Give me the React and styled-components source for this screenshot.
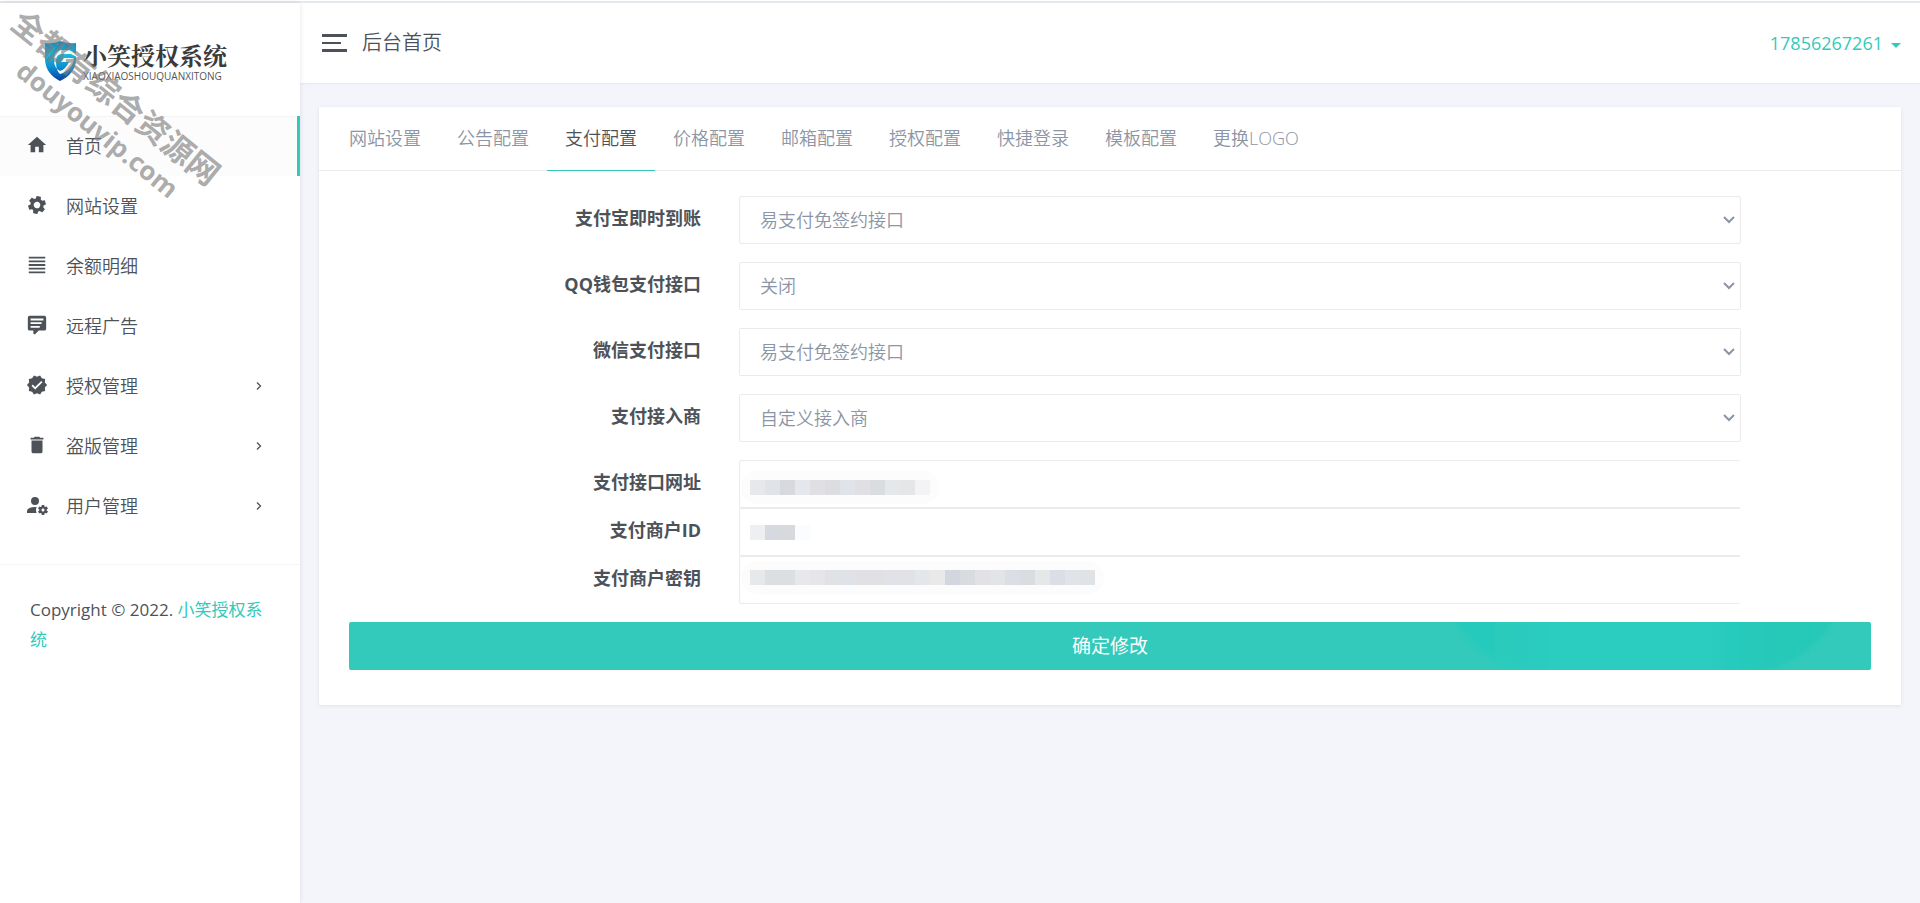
import React from 'react';
import styled, { createGlobalStyle, css } from 'styled-components';

const teal = '#33cabb';
const ink = '#4d5259';
const muted = '#8b95a5';
const line = '#ebebeb';

const GlobalStyle = createGlobalStyle`
  *, *::before, *::after { box-sizing: border-box; }
  body {
    margin: 0;
    background: #f3f5fa;
    color: ${ink};
    font: 350 18px/30px "Open Sans", "Noto Sans CJK SC", sans-serif;
  }
  a { color: inherit; text-decoration: none; }
  ul { margin: 0; padding: 0; list-style: none; }
  button, input, select { font: inherit; color: inherit; }
`;

const Page = styled.div`
  display: flex;
  min-height: calc(100vh - 3px);
`;

const TopRule = styled.div`
  height: 3px;
  background: #e4e9ee;
  border-top: 1px solid #fff;
`;

const Sidebar = styled.aside`
  position: relative;
  z-index: 2;
  flex: 0 0 300px;
  background: #fff;
  box-shadow: 0 0 5px rgba(0, 0, 0, 0.1);
`;

const Brand = styled.a`
  display: flex;
  align-items: center;
  gap: 6px;
  height: 113px;
  padding: 2px 44px 0;
`;

const BrandText = styled.span`
  display: flex;
  flex-direction: column;
  color: #3a3a3a;
`;

const BrandName = styled.strong`
  font: 700 24px/30px "Noto Serif CJK SC", "Noto Sans CJK SC", serif;
`;

const BrandPinyin = styled.span`
  color: #555;
  font: 400 10px/12px "Open Sans", sans-serif;
`;

const Watermark = styled.div`
  position: absolute;
  z-index: 3;
  top: 0;
  left: 28px;
  width: 270px;
  transform: rotate(39deg);
  transform-origin: 0 0;
  color: rgba(125, 125, 125, 0.65);
  font-weight: 700;
  pointer-events: none;
`;

const WatermarkLine = styled.div`
  font-size: ${(p) => (p.$latin ? '26px' : '32px')};
  line-height: 36px;
  padding-left: ${(p) => (p.$latin ? '34px' : '0')};
  white-space: nowrap;
`;

const NavLink = styled.a`
  display: flex;
  align-items: center;
  height: 60px;
  padding: 0 35px 0 26px;
  border-right: 3px solid transparent;
  ${(p) => p.$active && css`
    background: #fcfcfc;
    border-color: ${teal};
    box-shadow: inset 0 1px #f5f5f5;
  `}
`;

const NavIcon = styled.svg`
  width: 22px;
  height: 22px;
  margin: 0 18px 2px 0;
  fill: ${ink};
`;

const NavText = styled.span`
  flex: 1;
`;

const Footer = styled.p`
  margin: 28px 0 0;
  padding: 30px;
  border-top: 1px solid #f5f5f5;
  font-size: 17px;
  font-weight: 400;
  a { color: ${teal}; }
`;

const Main = styled.div`
  flex: 1;
  min-width: 0;
`;

const Header = styled.header`
  display: flex;
  align-items: center;
  height: 80px;
  padding: 0 19px 0 22px;
  background: #fff;
  box-shadow: 0 1px 2px rgba(0, 0, 0, 0.06);
`;

const MenuButton = styled.button`
  display: grid;
  gap: 5px;
  width: 25px;
  margin-right: 15px;
  padding: 0;
  border: 0;
  background: none;
`;

const MenuBar = styled.span`
  height: ${(p) => (p.$short ? '2px' : '3px')};
  width: ${(p) => (p.$short ? '19px' : '25px')};
  background: ${ink};
`;

const Title = styled.h1`
  flex: 1;
  margin: 0;
  font-size: 20px;
  font-weight: 350;
`;

const UserButton = styled.button`
  display: flex;
  align-items: center;
  gap: 8px;
  padding: 0;
  border: 0;
  background: none;
  color: ${teal};
  font-weight: 400;
`;

const Caret = styled.span`
  margin-top: 4px;
  border: 5px solid transparent;
  border-top-color: ${teal};
  border-bottom: 0;
`;

const Card = styled.section`
  margin: 24px 19px;
  background: #fff;
  box-shadow: 0 1px 4px rgba(0, 0, 0, 0.08);
`;

const Tabs = styled.nav`
  display: flex;
  height: 64px;
  padding: 0 12px;
  border-bottom: 1px solid ${line};
`;

const Tab = styled.a`
  height: 64px;
  padding: 16px 18px 0;
  border-bottom: 1px solid ${(p) => (p.$active ? teal : 'transparent')};
  color: ${(p) => (p.$active ? ink : muted)};
`;

const Form = styled.form`
  padding: 25px 30px 35px;
`;

const Row = styled.div`
  display: grid;
  grid-template-columns: 3fr 8fr 1fr;
  margin: 0 -19px ${(p) => (p.$tight ? '0' : '18px')};
`;

const Label = styled.label`
  padding: 7px 19px 0;
  text-align: right;
  font-weight: 700;
`;

const Control = styled.div`
  position: relative;
  margin: 0 19px;
`;

const fieldBox = css`
  display: block;
  width: 100%;
  height: 48px;
  border: 1px solid ${line};
  border-radius: 2px;
  background: #fff;
  color: ${muted};
  outline: 0;
`;

const Select = styled.select`
  ${fieldBox}
  appearance: none;
  padding: 0 20px;
`;

const Input = styled.input`
  ${fieldBox}
  padding: 0 12px;
  border-right-color: transparent;
`;

const Chevron = styled.svg`
  position: absolute;
  right: 6px;
  top: 20px;
  width: 12px;
  height: 8px;
  pointer-events: none;
`;

const Mosaic = styled.div`
  position: absolute;
  top: ${(p) => p.$top};
  left: 11px;
  display: flex;
  border-radius: 8px;
  box-shadow: ${(p) => (p.$halo ? '0 0 0 9px #fcfcfc' : 'none')};
  pointer-events: none;
`;

const Tile = styled.i`
  width: 15px;
  height: 15px;
  background: ${(p) => p.$tone};
`;

const Submit = styled.button`
  position: relative;
  display: block;
  width: 100%;
  height: 48px;
  border: 0;
  border-radius: 2px;
  background: ${teal};
  color: #fff;
  font-size: 19px;
  font-weight: 400;
`;

const Smudge = styled.svg`
  position: absolute;
  top: 0;
  right: 20px;
  width: 410px;
  height: 48px;
`;

const icons = {
  home: 'M10,20V14H14V20H19V12H22L12,3L2,12H5V20H10Z',
  cog: 'M19.14,12.94c0.04-0.3,0.06-0.61,0.06-0.94c0-0.32-0.02-0.64-0.07-0.94l2.03-1.58c0.18-0.14,0.23-0.41,0.12-0.61l-1.92-3.32c-0.12-0.22-0.37-0.29-0.59-0.22l-2.39,0.96c-0.5-0.38-1.03-0.7-1.62-0.94L14.4,2.81c-0.04-0.24-0.24-0.41-0.48-0.41h-3.84c-0.24,0-0.43,0.17-0.47,0.41L9.25,5.35C8.66,5.59,8.12,5.92,7.63,6.29L5.24,5.33c-0.22-0.08-0.47,0-0.59,0.22L2.74,8.87C2.62,9.08,2.66,9.34,2.86,9.48l2.03,1.58C4.84,11.36,4.8,11.69,4.8,12s0.02,0.64,0.07,0.94l-2.03,1.58c-0.18,0.14-0.23,0.41-0.12,0.61l1.92,3.32c0.12,0.22,0.37,0.29,0.59,0.22l2.39-0.96c0.5,0.38,1.03,0.7,1.62,0.94l0.36,2.54c0.05,0.24,0.24,0.41,0.48,0.41h3.84c0.24,0,0.44-0.17,0.47-0.41l0.36-2.54c0.59-0.24,1.13-0.56,1.62-0.94l2.39,0.96c0.22,0.08,0.47,0,0.59-0.22l1.92-3.32c0.12-0.22,0.07-0.47-0.12-0.61L19.14,12.94z M12,15.6c-1.98,0-3.6-1.62-3.6-3.6s1.62-3.6,3.6-3.6s3.6,1.62,3.6,3.6S13.98,15.6,12,15.6z',
  lines: 'M3,3H21V5H3V3M3,7H21V9H3V7M3,11H21V13H3V11M3,15H21V17H3V15M3,19H21V21H3V19Z',
  comment: 'M9,22A1,1 0 0,1 8,21V18H4A2,2 0 0,1 2,16V4C2,2.89 2.9,2 4,2H20A2,2 0 0,1 22,4V16A2,2 0 0,1 20,18H13.9L10.2,21.71C10,21.9 9.75,22 9.5,22H9M5,5V7H19V5H5M5,9V11H17V9H5M5,13V15H15V13H5Z',
  verified: 'M23,12L20.56,9.22L20.9,5.54L17.29,4.72L15.4,1.54L12,3L8.6,1.54L6.71,4.72L3.1,5.53L3.44,9.21L1,12L3.44,14.78L3.1,18.47L6.71,19.29L8.6,22.47L12,21L15.4,22.46L17.29,19.28L20.9,18.46L20.56,14.78L23,12M10,17L6,13L7.41,11.59L10,14.17L16.59,7.58L18,9L10,17Z',
  trash: 'M19,4H15.5L14.5,3H9.5L8.5,4H5V6H19M6,19A2,2 0 0,0 8,21H16A2,2 0 0,0 18,19V7H6V19Z',
  users: 'M10 4A4 4 0 0 0 6 8A4 4 0 0 0 10 12A4 4 0 0 0 14 8A4 4 0 0 0 10 4M17 12C16.87 12 16.76 12.09 16.74 12.21L16.55 13.53C16.25 13.66 15.96 13.82 15.7 14L14.46 13.5C14.35 13.5 14.22 13.5 14.15 13.63L13.15 15.36C13.09 15.47 13.11 15.6 13.21 15.68L14.27 16.5C14.25 16.67 14.24 16.83 14.24 17C14.24 17.17 14.25 17.33 14.27 17.5L13.21 18.32C13.12 18.4 13.09 18.53 13.15 18.64L14.15 20.37C14.21 20.5 14.34 20.5 14.46 20.5L15.7 20C15.96 20.18 16.24 20.35 16.55 20.47L16.74 21.79C16.76 21.91 16.86 22 17 22H19C19.11 22 19.22 21.91 19.24 21.79L19.43 20.47C19.73 20.34 20 20.18 20.27 20L21.5 20.5C21.63 20.5 21.76 20.5 21.83 20.37L22.83 18.64C22.89 18.53 22.86 18.4 22.77 18.32L21.7 17.5C21.72 17.33 21.74 17.17 21.74 17C21.74 16.83 21.73 16.67 21.7 16.5L22.76 15.68C22.85 15.6 22.88 15.47 22.82 15.36L21.82 13.63C21.76 13.5 21.63 13.5 21.5 13.5L20.27 14C20 13.82 19.73 13.65 19.42 13.53L19.23 12.21C19.22 12.09 19.11 12 19 12H17M10 14C5.58 14 2 15.79 2 18V20H11.68A7 7 0 0 1 11 17A7 7 0 0 1 11.64 14.09C11.11 14.03 10.56 14 10 14M18 15.5C18.83 15.5 19.5 16.17 19.5 17C19.5 17.83 18.83 18.5 18 18.5C17.16 18.5 16.5 17.83 16.5 17C16.5 16.17 17.17 15.5 18 15.5Z',
};

const nav = [
  { text: '首页', icon: 'home', active: true },
  { text: '网站设置', icon: 'cog', tilt: 12 },
  { text: '余额明细', icon: 'lines' },
  { text: '远程广告', icon: 'comment' },
  { text: '授权管理', icon: 'verified', more: true },
  { text: '盗版管理', icon: 'trash', more: true },
  { text: '用户管理', icon: 'users', box: '1 1 22 22', more: true },
];

const tabs = ['网站设置', '公告配置', '支付配置', '价格配置', '邮箱配置', '授权配置', '快捷登录', '模板配置', '更换LOGO'];

const selects = [
  ['alipay', '支付宝即时到账', '易支付免签约接口'],
  ['qqpay', 'QQ钱包支付接口', '关闭'],
  ['wxpay', '微信支付接口', '易支付免签约接口'],
  ['provider', '支付接入商', '自定义接入商'],
];

const inputs = [
  { id: 'url', label: '支付接口网址', top: '20px', halo: true, tones: '#e7e8eb #e0e4e8 #d8d9de #e4e8ec #e0e0e2 #dcdde1 #e0e3e7 #dfdfe4 #d9dde0 #e4e8eb #e5e6e8 #f3f3f5' },
  { id: 'pid', label: '支付商户ID', top: '17px', tones: '#eeeff1 #d6d9df #d8d9dd #fbfcff' },
  { id: 'key', label: '支付商户密钥', top: '14px', halo: true, tones: '#e7e8e9 #dcdfe1 #dcdfe1 #e7e8ea #e6e6ea #e1e2e6 #dfe2e8 #e1e1e5 #e0e1e3 #e0e2e8 #e0e2e8 #e3e7ea #e9e9ea #d1d6df #d8dce0 #e2e2e6 #e3e4e6 #dbdfe5 #d9dde0 #e6e7e9 #dbdee5 #e0e4e8 #dfe3e6' },
];

function Shield() {
  return (
    <svg width="33" height="42" viewBox="0 0 33 42" aria-hidden="true">
      <defs>
        <linearGradient id="shield" x1="0" y1="0" x2="0" y2="1">
          <stop offset="0" stopColor="#1583c0" />
          <stop offset="0.35" stopColor="#14bbdc" />
          <stop offset="0.65" stopColor="#0c8fd4" />
          <stop offset="1" stopColor="#0b3f9c" />
        </linearGradient>
      </defs>
      <path d="M1 3Q9 4 16 1Q24 4 32 3V20Q31 34 16 41Q2 34 1 20Z" fill="url(#shield)" />
      <path d="M33 14L25 10H17Q10 11 10 20Q10 28 16 31Q22 29 25 22H17L20 18H30Q29 30 16 34Q12 31 12 21Q12 14 18 14H27L33 17Z" fill="#f4fbfd" />
    </svg>
  );
}

export default function App() {
  return (
    <>
      <GlobalStyle />
      <TopRule />
      <Page>
        <Sidebar>
          <Brand href="#">
            <Shield />
            <BrandText>
              <BrandName>小笑授权系统</BrandName>
              <BrandPinyin>XIAOXIAOSHOUQUANXITONG</BrandPinyin>
            </BrandText>
          </Brand>
          <ul>
            {nav.map(({ text, icon, active, more, tilt, box }) => (
              <li key={text}>
                <NavLink href="#" $active={active}>
                  <NavIcon viewBox={box || '0 0 24 24'} aria-hidden="true">
                    <path d={icons[icon]} transform={tilt ? `rotate(${tilt} 12 12)` : undefined} />
                  </NavIcon>
                  <NavText>{text}</NavText>
                  {more && (
                    <svg width="6" height="8" viewBox="0 0 6 8" fill="none" stroke={ink} strokeWidth="1.3">
                      <path d="M1 0.5L4.5 4L1 7.5" />
                    </svg>
                  )}
                </NavLink>
              </li>
            ))}
          </ul>
          <Footer>Copyright © 2022. <a href="#">小笑授权系统</a></Footer>
          <Watermark>
            <WatermarkLine>全都有综合资源网</WatermarkLine>
            <WatermarkLine $latin>douyouvip.com</WatermarkLine>
          </Watermark>
        </Sidebar>
        <Main>
          <Header>
            <MenuButton type="button" aria-label="菜单">
              <MenuBar />
              <MenuBar $short />
              <MenuBar />
            </MenuButton>
            <Title>后台首页</Title>
            <UserButton type="button">17856267261<Caret /></UserButton>
          </Header>
          <Card>
            <Tabs>
              {tabs.map((t) => <Tab key={t} href="#" $active={t === '支付配置'}>{t}</Tab>)}
            </Tabs>
            <Form>
              {selects.map(([id, label, value]) => (
                <Row key={id}>
                  <Label htmlFor={id}>{label}</Label>
                  <Control>
                    <Select id={id}><option>{value}</option></Select>
                    <Chevron viewBox="0 0 12 8" fill="none" stroke={muted} strokeWidth="2">
                      <path d="M1 1L6 6L11 1" />
                    </Chevron>
                  </Control>
                </Row>
              ))}
              {inputs.map(({ id, label, top, halo, tones }, i) => (
                <Row key={id} $tight={i < inputs.length - 1}>
                  <Label htmlFor={id}>{label}</Label>
                  <Control>
                    <Input id={id} type="text" />
                    <Mosaic $top={top} $halo={halo}>
                      {tones.split(' ').map((tone, n) => <Tile key={n} $tone={tone} />)}
                    </Mosaic>
                  </Control>
                </Row>
              ))}
              <Submit type="submit">
                确定修改
                <Smudge viewBox="0 0 410 48" aria-hidden="true">
                  <defs>
                    <linearGradient id="smudge" x1="0" y1="0" x2="1" y2="0">
                      <stop offset="0" stopColor="#28c9bb" />
                      <stop offset="0.3" stopColor="#2acdc0" />
                      <stop offset="0.65" stopColor="#2acdc0" />
                      <stop offset="0.85" stopColor="#25c8b8" />
                      <stop offset="1" stopColor="#25c8b8" />
                    </linearGradient>
                    <filter id="soft"><feGaussianBlur stdDeviation="2" /></filter>
                  </defs>
                  <path d="M12 -4H394Q370 38 316 52H86Q36 40 12 -4Z" fill="url(#smudge)" filter="url(#soft)" />
                </Smudge>
              </Submit>
            </Form>
          </Card>
        </Main>
      </Page>
    </>
  );
}
